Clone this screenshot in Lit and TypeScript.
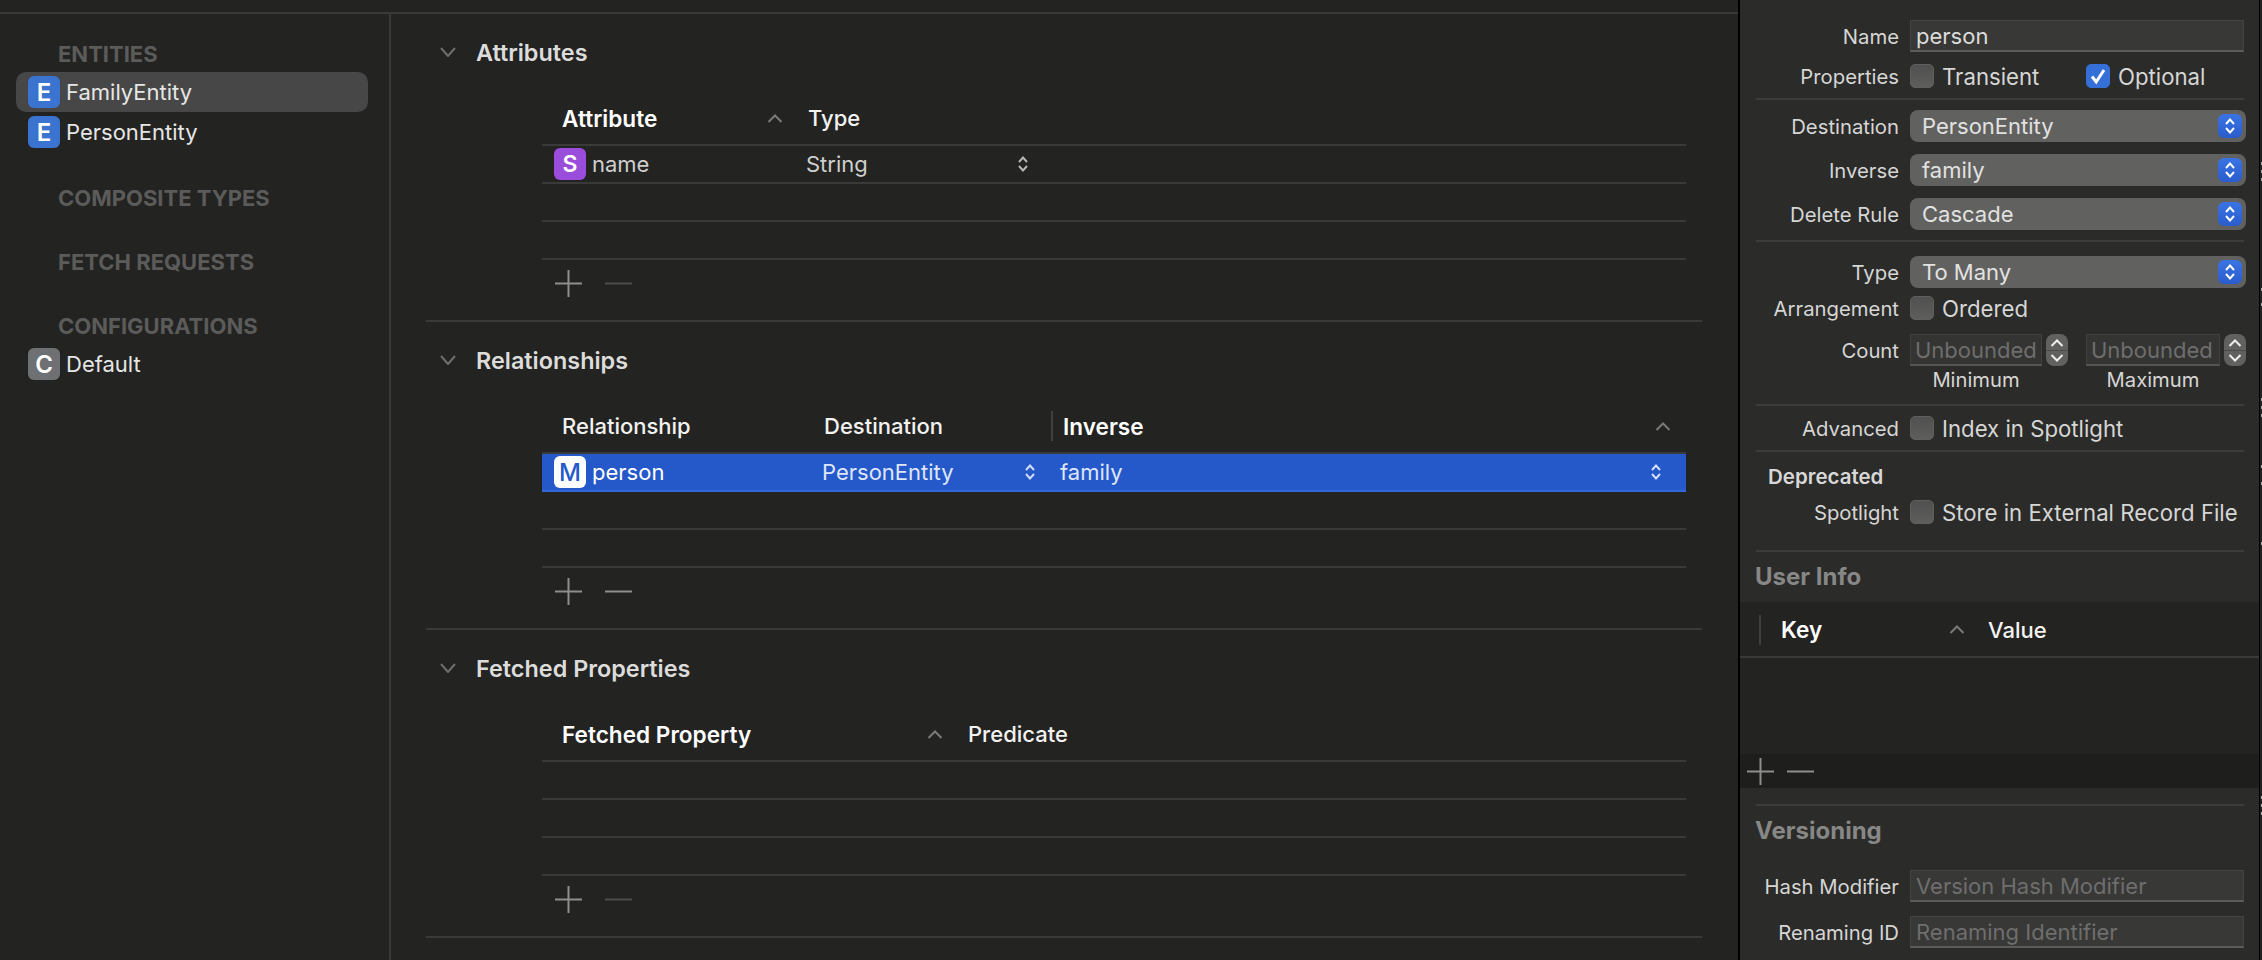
import { LitElement, html, css } from "lit";
import { customElement } from "lit/decorators.js";

const chevron = () => html`<svg class="chev" width="16" height="10" viewBox="0 0 16 10"><path d="M1 1L8 9L15 1" fill="none" stroke="#6f6f6e" stroke-width="2"/></svg>`;
const sort = () => html`<svg class="sort" width="16" height="9" viewBox="0 0 16 9"><path d="M1.5 8L8 1.5L14.5 8" fill="none" stroke="#7a7a79" stroke-width="2"/></svg>`;
const updown = (color: string, w = 10, h = 16) => html`<svg class="updown" width=${w} height=${h} viewBox="0 0 10 16"><path d="M1 6L5 1.5L9 6M1 10L5 14.5L9 10" fill="none" stroke=${color} stroke-width="1.9"/></svg>`;
const plus = () => html`<svg width="27" height="27" viewBox="0 0 27 27"><path d="M0 13.5H27M13.5 0V27" stroke="#8e8e8d" stroke-width="2"/></svg>`;
const minus = (on: boolean) => html`<svg width="27" height="27" viewBox="0 0 27 27"><path d="M0 13.5H27" stroke=${on ? "#8e8e8d" : "#4c4c4b"} stroke-width="2"/></svg>`;
const badge = (l: string, cls: string) => html`<span class="badge ${cls}">${l}</span>`;
const ticks = [162, 170, 178, 288, 303, 398, 406, 414, 465, 482, 542, 796, 804, 812];

@customElement("app-root")
export class AppRoot extends LitElement {
  static styles = css`
    :host { display: flex; width: 2262px; height: 960px; overflow: hidden; background: #232322; color: #d8d8d7; font-family: Inter, "Liberation Sans", sans-serif; font-size: 22px; position: relative; }
    * { box-sizing: border-box; }
    svg { display: block; flex: none; }
    .left { width: 1738px; display: flex; flex-direction: column; flex: none; }
    .top { height: 14px; border-bottom: 2px solid #3a3a39; flex: none; }
    .body { flex: 1; display: flex; min-height: 0; }
    .sidebar { width: 391px; border-right: 2px solid #3a3a39; flex: none; }
    .glabel { height: 28px; line-height: 28px; margin-left: 58px; font-weight: 700; font-size: 22px; color: #5b5b5a; white-space: nowrap; }
    .g0 { margin-top: 26px; margin-bottom: 4px; }
    .g1 { margin-top: 32px; }
    .g2 { margin-top: 36px; }
    .g3 { margin-top: 36px; margin-bottom: 4px; }
    .srow { height: 40px; margin-left: 16px; width: 352px; padding-left: 12px; display: flex; align-items: center; gap: 6px; border-radius: 10px; color: #e6e6e5; }
    .srow.sel { background: #474747; }
    .badge { width: 32px; height: 32px; flex: none; border-radius: 6px; display: flex; align-items: center; justify-content: center; font-weight: 600; font-size: 24px; color: #fff; }
    .b-e { background: #3a74d0; }
    .b-s { background: #9a4cdb; font-size: 23px; }
    .b-c { background: #6e7074; }
    .b-m { background: #fff; color: #2558c9; font-weight: 500; }
    .main { flex: 1; padding: 0 36px 0 35px; }
    .section { height: 308px; border-bottom: 2px solid #3a3a39; display: flex; flex-direction: column; padding-top: 24px; }
    .stitle { height: 28px; display: flex; align-items: center; gap: 20px; padding-left: 14px; font-weight: 600; font-size: 23.4px; color: #dcdcdb; flex: none; }
    .table { margin: 26px 0 0 116px; width: 1144px; }
    .thead { height: 54px; display: flex; align-items: center; border-bottom: 2px solid #3a3a39; color: #f2f2f1; font-weight: 500; }
    .bold { font-weight: 600; color: #fff; font-size: 22.6px; }
    .hc { display: flex; align-items: center; justify-content: space-between; padding-left: 20px; flex: none; }
    .w-attr { width: 266px; padding-right: 25px; }
    .w-rel { width: 282px; }
    .w-dest { width: 227px; padding-left: 0; }
    .w-inv { flex: 1; height: 30px; border-left: 2px solid #3f3f3e; padding-left: 10px; padding-right: 15px; }
    .w-fetch { width: 426px; padding-right: 25px; }
    .trow { height: 38px; border-bottom: 2px solid #3a3a39; display: flex; align-items: center; color: #cfcfce; }
    .trow.sel { background: #2558c9; border-bottom-color: #3367d6; color: #dfe6fa; }
    .c1 { display: flex; align-items: center; gap: 6px; padding-left: 12px; flex: none; }
    .c-name { width: 264px; }
    .c-type { width: 222px; display: flex; align-items: center; justify-content: space-between; }
    .c-person { width: 280px; color: #fff; }
    .c-dest { width: 238px; padding-right: 25px; display: flex; align-items: center; justify-content: space-between; }
    .c-fam { flex: 1; padding-right: 25px; display: flex; align-items: center; justify-content: space-between; }
    .tfoot { height: 46px; display: flex; align-items: center; gap: 23px; padding-left: 13px; }
    .vline { width: 2px; background: #000; flex: none; }
    .insp { width: 519px; flex: none; background: #2b2b2a; padding-top: 20px; display: flex; flex-direction: column; }
    .edge { flex: 1; background: #222; border-left: 1px solid #000; position: relative; }
    .tick { position: absolute; left: 1px; width: 2px; height: 3px; background: #aaa; }
    .row { display: flex; align-items: center; height: 32px; flex: none; }
    .lab { width: 159px; margin-right: 11px; text-align: right; color: #d6d6d5; flex: none; font-size: 20.3px; white-space: nowrap; }
    .field { width: 334px; height: 32px; background: #383837; border: 1px solid #444443; border-bottom: 2px solid #5c5c5b; padding-left: 5px; display: flex; align-items: center; color: #dcdcdb; }
    .ph { color: #6e6e6d; }
    .chkrow { height: 24px; }
    .cb { width: 24px; height: 24px; border-radius: 5px; background: linear-gradient(#505050, #5e5e5d); border: 1px solid #5f5f5e; flex: none; margin-right: 8px; }
    .cb.on { background: #3470d8; border-color: #3470d8; display: flex; align-items: center; justify-content: center; }
    .cbtext { color: #d6d6d5; white-space: nowrap; font-size: 22.2px; }
    .cap-tr { width: 144px; }
    .div { height: 2px; background: #3c3c3b; margin-left: 16px; width: 488px; flex: none; }
    .drop { width: 336px; height: 32px; border-radius: 8px; background: #616160; padding: 0 4px 0 12px; display: flex; align-items: center; justify-content: space-between; color: #e2e2e1; }
    .dbtn { width: 24px; height: 24px; border-radius: 6px; background: linear-gradient(#3a74e4, #2a5ccc); display: flex; align-items: center; justify-content: center; }
    .cfield { height: 32px; background: #343433; border: 1px solid #414140; border-bottom: 2px solid #555554; display: flex; align-items: center; padding-left: 4px; color: #6e6e6d; flex: none; }
    .nstep { width: 22px; height: 32px; border-radius: 8px; background: #616160; margin-left: 4px; flex: none; display: flex; flex-direction: column; align-items: center; justify-content: center; gap: 3px; }
    .nstep i { display: block; width: 22px; height: 1px; background: #4b4b4a; }
    .minmax { height: 26px; display: flex; align-items: center; flex: none; font-size: 20.2px; color: #d6d6d5; }
    .mm { text-align: center; flex: none; }
    .dep { height: 26px; line-height: 26px; margin-left: 28px; font-weight: 600; font-size: 20.5px; color: #d8d8d7; flex: none; }
    .ihead { height: 26px; line-height: 26px; margin-left: 15px; font-weight: 700; font-size: 24px; color: #878786; flex: none; }
    .dark { background: #232322; height: 152px; flex: none; }
    .khead { height: 56px; border-bottom: 2px solid #3a3a39; display: flex; align-items: center; color: #f2f2f1; font-weight: 500; padding-left: 19px; padding-top: 1px; }
    .ksep { width: 2px; height: 30px; background: #3f3f3e; flex: none; }
    .kcell { width: 207px; margin-left: 20px; padding-right: 23px; display: flex; align-items: center; justify-content: space-between; }
    .kfoot { background: #1e1e1d; height: 34px; display: flex; align-items: center; gap: 13px; padding-left: 7px; flex: none; }
  `;

  render() {
    return html`
      <div class="left">
        <div class="top"></div>
        <div class="body">
          <div class="sidebar">
            <div class="glabel g0">ENTITIES</div>
            <div class="srow sel">${badge("E", "b-e")}FamilyEntity</div>
            <div class="srow">${badge("E", "b-e")}PersonEntity</div>
            <div class="glabel g1">COMPOSITE TYPES</div>
            <div class="glabel g2">FETCH REQUESTS</div>
            <div class="glabel g3">CONFIGURATIONS</div>
            <div class="srow">${badge("C", "b-c")}Default</div>
          </div>
          <div class="main">
            <section class="section">
              <div class="stitle">${chevron()}Attributes</div>
              <div class="table">
                <div class="thead">
                  <div class="hc w-attr bold">Attribute${sort()}</div>
                  <div>Type</div>
                </div>
                <div class="trow">
                  <div class="c1 c-name">${badge("S", "b-s")}name</div>
                  <div class="c-type">String${updown("#b8b8b7")}</div>
                </div>
                <div class="trow"></div>
                <div class="trow"></div>
                <div class="tfoot">${plus()}${minus(false)}</div>
              </div>
            </section>
            <section class="section">
              <div class="stitle">${chevron()}Relationships</div>
              <div class="table">
                <div class="thead">
                  <div class="hc w-rel">Relationship</div>
                  <div class="hc w-dest">Destination</div>
                  <div class="hc w-inv bold">Inverse${sort()}</div>
                </div>
                <div class="trow sel">
                  <div class="c1 c-person">${badge("M", "b-m")}person</div>
                  <div class="c-dest">PersonEntity${updown("#d5def7")}</div>
                  <div class="c-fam">family${updown("#d5def7")}</div>
                </div>
                <div class="trow"></div>
                <div class="trow"></div>
                <div class="tfoot">${plus()}${minus(true)}</div>
              </div>
            </section>
            <section class="section">
              <div class="stitle">${chevron()}Fetched Properties</div>
              <div class="table">
                <div class="thead">
                  <div class="hc w-fetch bold">Fetched Property${sort()}</div>
                  <div>Predicate</div>
                </div>
                <div class="trow"></div>
                <div class="trow"></div>
                <div class="trow"></div>
                <div class="tfoot">${plus()}${minus(false)}</div>
              </div>
            </section>
          </div>
        </div>
      </div>
      <div class="vline"></div>
      <aside class="insp">
        <div class="row"><div class="lab">Name</div><div class="field">person</div></div>
        <div class="row chkrow" style="margin-top:12px">
          <div class="lab">Properties</div><div class="cb"></div><div class="cbtext cap-tr">Transient</div>
          <div class="cb on"><svg width="18" height="18" viewBox="0 0 18 18"><path d="M3 9.5L7.2 15L15 3" fill="none" stroke="#fff" stroke-width="3"/></svg></div><div class="cbtext">Optional</div>
        </div>
        <div class="div" style="margin-top:10px"></div>
        ${this.drop("Destination", "PersonEntity", 10)}
        ${this.drop("Inverse", "family", 12)}
        ${this.drop("Delete Rule", "Cascade", 12)}
        <div class="div" style="margin-top:10px"></div>
        ${this.drop("Type", "To Many", 14)}
        <div class="row chkrow" style="margin-top:8px"><div class="lab">Arrangement</div><div class="cb"></div><div class="cbtext">Ordered</div></div>
        <div class="row" style="margin-top:14px">
          <div class="lab">Count</div>
          <div class="cfield" style="width:132px">Unbounded</div>
          <div class="nstep">${this.nstepIcons()}</div>
          <div class="cfield" style="width:134px;margin-left:18px">Unbounded</div>
          <div class="nstep">${this.nstepIcons()}</div>
        </div>
        <div class="minmax">
          <div class="mm" style="margin-left:170px;width:132px">Minimum</div>
          <div class="mm" style="margin-left:44px;width:134px">Maximum</div>
        </div>
        <div class="div" style="margin-top:12px"></div>
        <div class="row chkrow" style="margin-top:10px"><div class="lab">Advanced</div><div class="cb"></div><div class="cbtext">Index in Spotlight</div></div>
        <div class="div" style="margin-top:10px"></div>
        <div class="dep" style="margin-top:12px">Deprecated</div>
        <div class="row chkrow" style="margin-top:10px"><div class="lab">Spotlight</div><div class="cb"></div><div class="cbtext">Store in External Record File</div></div>
        <div class="div" style="margin-top:26px"></div>
        <div class="ihead" style="margin-top:12px">User Info</div>
        <div class="dark" style="margin-top:12px">
          <div class="khead"><div class="ksep"></div><div class="kcell bold">Key${sort()}</div><div>Value</div></div>
        </div>
        <div class="kfoot">${plus()}${minus(true)}</div>
        <div class="div" style="margin-top:16px"></div>
        <div class="ihead" style="margin-top:12px">Versioning</div>
        <div class="row" style="margin-top:26px"><div class="lab">Hash Modifier</div><div class="field ph">Version Hash Modifier</div></div>
        <div class="row" style="margin-top:14px"><div class="lab">Renaming ID</div><div class="field ph">Renaming Identifier</div></div>
      </aside>
      <div class="edge">${ticks.map((t) => html`<div class="tick" style="top:${t}px"></div>`)}</div>
    `;
  }

  drop(label: string, value: string, mt: number) {
    return html`<div class="row" style="margin-top:${mt}px"><div class="lab">${label}</div><div class="drop">${value}<div class="dbtn">${updown("#fff", 10, 16)}</div></div></div>`;
  }

  nstepIcons() {
    return html`<svg width="14" height="8" viewBox="0 0 14 8"><path d="M1.5 7L7 1.5L12.5 7" fill="none" stroke="#eee" stroke-width="2"/></svg><i></i><svg width="14" height="8" viewBox="0 0 14 8"><path d="M1.5 1L7 6.5L12.5 1" fill="none" stroke="#eee" stroke-width="2"/></svg>`;
  }
}
